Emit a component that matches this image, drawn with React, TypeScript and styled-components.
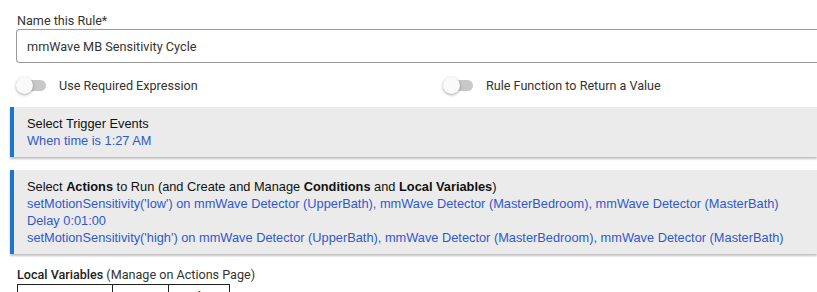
import React from "react";
import styled, { createGlobalStyle } from "styled-components";

const Global = createGlobalStyle`
  html, body { margin: 0; padding: 0; background: #fff; }
  body { font-family: Roboto, "Noto Sans", sans-serif; overflow: hidden; }
`;

const Page = styled.div`
  width: 817px;
  height: 292px;
  overflow: hidden;
  padding: 0 0 0 10px;
  box-sizing: border-box;
`;

const Field = styled.div`
  padding: 12px 0 0 6px;
`;

const Label = styled.div`
  font-size: 12.6px;
  color: #333;
  line-height: 17px;
  padding-left: 1px;
`;

const Input = styled.div`
  height: 32px;
  border: 1px solid #999;
  border-right: none;
  border-radius: 4px 0 0 4px;
  margin-right: -20px;
  display: flex;
  align-items: center;
  padding-left: 10px;
  font-size: 12.7px;
  color: #333;
`;

const ToggleRow = styled.div`
  display: grid;
  grid-template-columns: 427px 1fr;
  height: 22px;
  margin-top: 11px;
  padding-left: 6px;
`;

const ToggleItem = styled.div`
  display: flex;
  align-items: center;
  gap: 13px;
  font-size: 12.6px;
  color: #333;
`;

const Track = styled.span`
  position: relative;
  width: 28px;
  height: 11px;
  margin-left: 2px;
  border-radius: 6px;
  background: #c8c8c8;
  flex: none;
  &::after {
    content: "";
    position: absolute;
    left: -2px;
    top: -3px;
    width: 17px;
    height: 17px;
    border-radius: 50%;
    background: #fafafa;
    box-shadow: 0 1px 3px rgba(0, 0, 0, 0.35);
  }
`;

const Card = styled.div<{ $top: number }>`
  margin-top: ${(p) => p.$top}px;
  background: #ebebeb;
  border-left: 4px solid #1b76cc;
  box-shadow: 0 2px 2px rgba(0, 0, 0, 0.25);
  padding: 8px 0 8px 13px;
  font-family: "Liberation Sans", Arial, sans-serif;
  font-size: 12.8px;
  line-height: 17px;
  color: #111;
`;

const Line = styled.div`
  white-space: nowrap;
`;

const Link = styled.div`
  white-space: nowrap;
  color: #2f58cf;
`;

const Section = styled.div`
  margin-top: 13px;
  padding-left: 7px;
  font-size: 12.6px;
  color: #333;
  line-height: 16px;
`;

const Strong = styled.span`
  font-weight: 500;
  color: #222;
`;

const Table = styled.table`
  margin-top: 1px;
  border-collapse: collapse;
  font-size: 12.6px;
  color: #333;
`;

const Th = styled.th<{ $w: number }>`
  width: ${(p) => p.$w}px;
  border: 1px solid #222;
  font-weight: 500;
  height: 24px;
  padding: 0;
  text-align: center;
`;

export default function App() {
  return (
    <>
      <Global />
      <Page>
        <Field>
          <Label>Name this Rule*</Label>
          <Input>mmWave MB Sensitivity Cycle</Input>
        </Field>
        <ToggleRow>
          <ToggleItem>
            <Track />
            Use Required Expression
          </ToggleItem>
          <ToggleItem>
            <Track />
            Rule Function to Return a Value
          </ToggleItem>
        </ToggleRow>
        <Card $top={11}>
          <Line>Select Trigger Events</Line>
          <Link>When time is 1:27 AM</Link>
        </Card>
        <Card $top={13}>
          <Line>
            Select <b>Actions</b> to Run (and Create and Manage <b>Conditions</b> and{" "}
            <b>Local Variables</b>)
          </Line>
          <Link>
            setMotionSensitivity('low') on mmWave Detector (UpperBath), mmWave Detector
            (MasterBedroom), mmWave Detector (MasterBath)
          </Link>
          <Link>Delay 0:01:00</Link>
          <Link>
            setMotionSensitivity('high') on mmWave Detector (UpperBath), mmWave Detector
            (MasterBedroom), mmWave Detector (MasterBath)
          </Link>
        </Card>
        <Section>
          <Strong>Local Variables</Strong> (Manage on Actions Page)
          <Table>
            <thead>
              <tr>
                <Th $w={94}>Name</Th>
                <Th $w={55}>Type</Th>
                <Th $w={60}>Value</Th>
              </tr>
            </thead>
          </Table>
        </Section>
      </Page>
    </>
  );
}
